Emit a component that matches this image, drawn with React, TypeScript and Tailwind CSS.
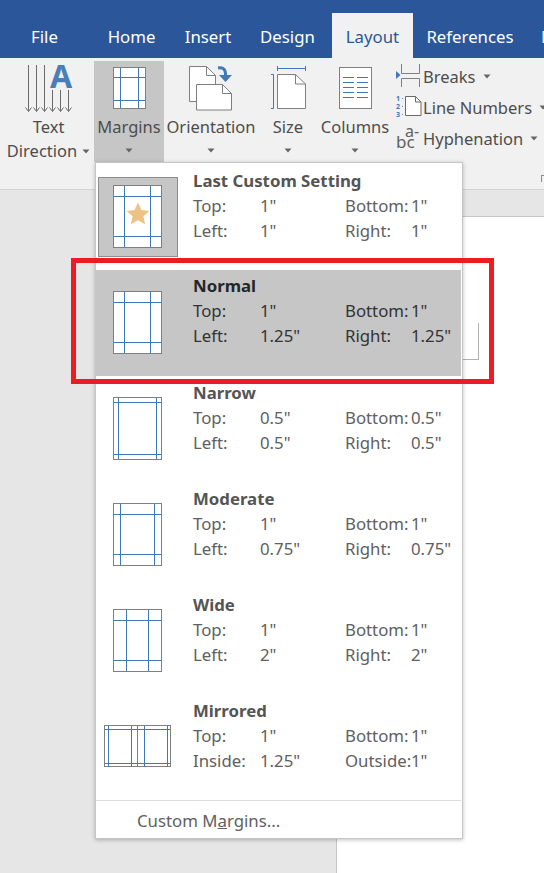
import React from "react";

const FONT = { fontFamily: '"Noto Sans", "Open Sans", sans-serif' };

function Caret({ className = "" }: { className?: string }) {
  return (
    <svg width="8" height="5" viewBox="0 0 8 5" className={"shrink-0 " + className}>
      <path d="M0.5 0.5h7L4 4.5z" fill="#666666" />
    </svg>
  );
}

function Tab({ w, label, active }: { w: string; label: string; active?: boolean }) {
  return (
    <div className={`${w} shrink-0 flex justify-center pt-[1px] h-[45px] leading-[45px] ${active ? "bg-[#f1f1f1] text-[#2b579a]" : "text-white"}`}>
      {label}
    </div>
  );
}

function TextDirIcon() {
  const arrows: [number, number][] = [[29, 65], [37, 65], [45, 65], [53, 90], [61, 90], [69, 90]];
  return (
    <svg width="94" height="54" viewBox="3 61 94 54" className="overflow-visible">
      {arrows.map(([x, y]) => (
        <path key={x} d={`M${x}.5 ${y}V111M${x - 2.5} 107.5l3 4 3-4`} fill="none" stroke="#6b6b6b" strokeWidth="1" />
      ))}
      <text x="51" y="88" fontFamily="Noto Sans" fontWeight="700" fontSize="32" fill="#4a7ebb">A</text>
    </svg>
  );
}

function RibbonMarginsIcon() {
  return (
    <svg width="70" height="54" viewBox="94 61 70 54">
      <rect x="113.500" y="67.500" width="32" height="41" fill="#fff" stroke="#7f7f7f" />
      <path d="M120.500 68v40M138.500 68v40M114 77.500h31M114 100.500h31" stroke="#3f79b8" />
    </svg>
  );
}

function OrientationIcon() {
  return (
    <svg width="94" height="54" viewBox="164 61 94 54">
      <path d="M189.500 66.500h17l9 9v26h-26z" fill="#fff" stroke="#7f7f7f" />
      <path d="M206.500 66.500v9h9" fill="none" stroke="#7f7f7f" />
      <path d="M196.500 84.500h26l9 9v16.500h-35z" fill="#fff" stroke="#7f7f7f" />
      <path d="M222.500 84.500v9h9" fill="none" stroke="#7f7f7f" />
      <path d="M218 68c6-1 8 2 7.500 9" fill="none" stroke="#3f79b8" strokeWidth="3" />
      <path d="M219 75l6.500 7 6.500-7z" fill="#3f79b8" />
    </svg>
  );
}

function SizeIcon() {
  return (
    <svg width="60" height="54" viewBox="258 61 60 54">
      <path d="M277.500 66v5M305.500 66v5M277.500 68.500h28" fill="none" stroke="#3f79b8" />
      <path d="M271 74.500h2.500v34H271" fill="none" stroke="#3f79b8" />
      <path d="M277.500 74.500h18l10 9.500v24.500h-28z" fill="#fff" stroke="#7f7f7f" />
      <path d="M295.500 74.500v9.500h10" fill="none" stroke="#7f7f7f" />
    </svg>
  );
}

function ColumnsIcon() {
  return (
    <svg width="74" height="54" viewBox="318 61 74 54">
      <rect x="339.500" y="67.500" width="32" height="41" fill="#fff" stroke="#7f7f7f" />
      <path d="M343 77.500h11M357 77.500h11M343 82.500h11M357 82.500h11M343 87.500h11M357 87.500h11M343 92.500h11M357 92.500h11M343 97.500h11M357 97.500h11" stroke="#3f79b8" />
    </svg>
  );
}

function BigButton({ w, icon, lines, active, caretInline }: { w: string; icon: React.ReactNode; lines: string[]; active?: boolean; caretInline?: boolean }) {
  return (
    <div className={`${w} shrink-0 h-[101px] flex flex-col items-center ${active ? "bg-[#c6c6c6]" : ""}`}>
      <div className="h-[54px]">{icon}</div>
      {lines.map((l, i) => (
        <div key={l} className="h-[24px] leading-[24px] whitespace-nowrap flex items-center gap-[5px]">
          {l}
          {caretInline && i === lines.length - 1 ? <Caret /> : null}
        </div>
      ))}
      {!caretInline ? <div className="h-[24px] flex items-center"><Caret /></div> : null}
    </div>
  );
}

function SmallRow({ icon, label }: { icon: React.ReactNode; label: string }) {
  return (
    <div className="h-[31px] flex items-center">
      <div className="w-[27px] h-[31px] shrink-0">{icon}</div>
      <span className="whitespace-nowrap leading-[31px]">{label}</span>
      <Caret className="ml-[7px]" />
    </div>
  );
}

function PageIcon({ v, h, star }: { v: [number, number]; h: [number, number]; star?: boolean }) {
  return (
    <svg width="49" height="63" viewBox="0 0 49 63" className="block" shapeRendering="crispEdges">
      <rect x="0.500" y="0.500" width="48" height="62" fill="#fff" stroke="#7f7f7f" />
      <path d={`M${v[0]}.5 1v61M${v[1]}.5 1v61M1 ${h[0]}.5h47M1 ${h[1]}.5h47`} stroke="#3f79b8" />
      {star ? <path d="M25 17.500l3.400 7.500 8 .9-6 5.400 1.700 8-7.100-4.100-7.100 4.100 1.700-8-6-5.400 8-.9z" fill="#ecc384" shapeRendering="auto" /> : null}
    </svg>
  );
}

function MirroredIcon() {
  return (
    <svg width="67" height="43" viewBox="0 0 67 43" className="block" shapeRendering="crispEdges">
      <rect x="0.500" y="0.500" width="66" height="41" fill="#fff" stroke="#7f7f7f" />
      <path d="M33.500 1v41" stroke="#7f7f7f" />
      <path d="M4.500 1v41M27.500 1v41M40.500 1v41M63.500 1v41M1 4.500h65M1 38.500h65" stroke="#3f79b8" />
    </svg>
  );
}

type Row = {
  title: string;
  a: [string, string];
  b: [string, string];
  c: [string, string];
  d: [string, string];
  icon: React.ReactNode;
  slot: string;
  h: string;
  active?: boolean;
};

const rows: Row[] = [
  {
    title: "Last Custom Setting", a: ["Top:", '1"'], b: ["Bottom:", '1"'], c: ["Left:", '1"'], d: ["Right:", '1"'],
    icon: (
      <div className="w-[80px] h-[80px] bg-[#c6c6c6] border border-[#8c8c8c] pl-[14px] pt-[7px]">
        <PageIcon v={[11, 37]} h={[11, 51]} star />
      </div>
    ),
    slot: "pl-[2px] pt-[12px]", h: "h-[105px]",
  },
  { title: "Normal", a: ["Top:", '1"'], b: ["Bottom:", '1"'], c: ["Left:", '1.25"'], d: ["Right:", '1.25"'], icon: <PageIcon v={[11, 37]} h={[11, 51]} />, slot: "pl-[17px] pt-[21px]", h: "h-[106px]", active: true },
  { title: "Narrow", a: ["Top:", '0.5"'], b: ["Bottom:", '0.5"'], c: ["Left:", '0.5"'], d: ["Right:", '0.5"'], icon: <PageIcon v={[5, 43]} h={[5, 57]} />, slot: "pl-[17px] pt-[20px]", h: "h-[106px] mt-[1px]" },
  { title: "Moderate", a: ["Top:", '1"'], b: ["Bottom:", '1"'], c: ["Left:", '0.75"'], d: ["Right:", '0.75"'], icon: <PageIcon v={[7, 41]} h={[11, 51]} />, slot: "pl-[17px] pt-[20px]", h: "h-[106px]" },
  { title: "Wide", a: ["Top:", '1"'], b: ["Bottom:", '1"'], c: ["Left:", '2"'], d: ["Right:", '2"'], icon: <PageIcon v={[13, 35]} h={[11, 51]} />, slot: "pl-[17px] pt-[20px]", h: "h-[106px]" },
  { title: "Mirrored", a: ["Top:", '1"'], b: ["Bottom:", '1"'], c: ["Inside:", '1.25"'], d: ["Outside:", '1"'], icon: <MirroredIcon />, slot: "pl-[8px] pt-[30px]", h: "h-[105px]" },
];

function MenuRow({ r }: { r: Row }) {
  const tone = r.active ? "text-[#333333]" : "text-[#606060]";
  return (
    <div className={`${r.h} flex shrink-0 mr-[1px] ${r.active ? "bg-[#c6c6c6]" : ""}`}>
      <div className={`w-[97px] shrink-0 ${r.slot}`}>{r.icon}</div>
      <div className={`flex-1 pt-[3px] text-[16.8px] leading-[25px] ${tone}`}>
        <div className={`font-bold whitespace-nowrap ${r.active ? "text-[#262626]" : "text-[#555555]"}`}>{r.title}</div>
        <div className="grid grid-cols-[67px_85px_66px_1fr] whitespace-nowrap">
          <span>{r.a[0]}</span><span>{r.a[1]}</span><span>{r.b[0]}</span><span>{r.b[1]}</span>
          <span>{r.c[0]}</span><span>{r.c[1]}</span><span>{r.d[0]}</span><span>{r.d[1]}</span>
        </div>
      </div>
    </div>
  );
}

export default function App() {
  return (
    <div style={FONT} className="relative w-[544px] h-[873px] overflow-hidden flex flex-col bg-[#e6e6e6] text-[16.500px]">
      <div className="h-[58px] bg-[#2b579a] flex items-end shrink-0 overflow-hidden text-[16.800px]">
        <Tab w="w-[89px]" label="File" />
        <div className="w-[1px] shrink-0" />
        <Tab w="w-[83px]" label="Home" />
        <Tab w="w-[70px]" label="Insert" />
        <Tab w="w-[89px]" label="Design" />
        <Tab w="w-[81px]" label="Layout" active />
        <Tab w="w-[114px]" label="References" />
        <div className="pl-[14px] h-[45px] leading-[45px] text-white whitespace-nowrap pt-[1px]">Mailings</div>
      </div>

      <div className="relative h-[132px] shrink-0 bg-[#f1f1f1] border-b border-[#d4d4d4] pt-[3px] flex text-[#4d4d4d]">
        <div className="w-[94px] shrink-0 pl-[3px]">
          <BigButton w="w-[91px]" icon={<TextDirIcon />} lines={["Text", "Direction"]} caretInline />
        </div>
        <BigButton w="w-[70px]" icon={<RibbonMarginsIcon />} lines={["Margins"]} active />
        <BigButton w="w-[94px]" icon={<OrientationIcon />} lines={["Orientation"]} />
        <BigButton w="w-[60px]" icon={<SizeIcon />} lines={["Size"]} />
        <BigButton w="w-[74px]" icon={<ColumnsIcon />} lines={["Columns"]} />
        <div className="pl-[4px] flex flex-col shrink-0">
          <SmallRow
            label="Breaks"
            icon={
              <svg width="27" height="31" viewBox="396 61 27 31">
                <path d="M401.500 64v9.500h18V64M401.500 87v-8.500h18V87" fill="none" stroke="#7f7f7f" />
                <path d="M396 71l4.500 4-4.500 4z" fill="#3f79b8" />
              </svg>
            }
          />
          <SmallRow
            label="Line Numbers"
            icon={
              <svg width="27" height="31" viewBox="396 92 27 31" className="overflow-visible">
                <text x="396" y="101" fontSize="7" fontWeight="700" fontFamily="Noto Sans" fill="#3f79b8">1</text>
                <text x="396" y="109" fontSize="7" fontWeight="700" fontFamily="Noto Sans" fill="#3f79b8">2</text>
                <text x="396" y="117" fontSize="7" fontWeight="700" fontFamily="Noto Sans" fill="#3f79b8">3</text>
                <path d="M402 98.500h1M402 106.500h1M402 114.500h1" stroke="#8c8c8c" />
                <path d="M405.500 96.500h10l5.500 5.500v13.500h-15.500z" fill="#fff" stroke="#6b6b6b" />
                <path d="M415.500 96.500v5.500h5.500" fill="none" stroke="#6b6b6b" />
              </svg>
            }
          />
          <SmallRow
            label="Hyphenation"
            icon={
              <svg width="27" height="31" viewBox="396 123 27 31" className="overflow-visible">
                <text x="405" y="137" fontSize="16" fontFamily="Noto Sans" fill="#606060">a-</text>
                <text x="396" y="148" fontSize="17" fontFamily="Noto Sans" fill="#606060">bc</text>
              </svg>
            }
          />
        </div>
        <div className="absolute right-0 bottom-[7px] w-[3px] h-[7px] border-l border-t border-[#8c8c8c]" />
      </div>

      <div className="flex-1 pt-[26px] pl-[336px]">
        <div className="relative h-full bg-white border-t border-l border-[#c6c6c6]">
          <div className="absolute left-[112px] top-[106px] w-[30px] h-[37px] border-r border-b border-[#b0b0b0]" />
        </div>
      </div>

      <div className="absolute left-[95px] top-[162px] w-[368px] h-[677px] bg-white border border-[#c6c6c6] shadow-[0_1px_4px_rgba(0,0,0,0.25)] flex flex-col pt-[2px]">
        {rows.map((r) => (
          <MenuRow key={r.title} r={r} />
        ))}
        <div className="mr-[1px] border-t border-[#dcdcdc] flex-1 pl-[41px] pt-[7px] text-[16.800px] leading-[25px] text-[#606060] whitespace-nowrap">
          Custom M<span className="underline">a</span>rgins...
        </div>
      </div>

      <div className="absolute left-[71px] top-[258px] w-[423px] h-[126px] border-[5px] border-[#ed1c24]" />
    </div>
  );
}
